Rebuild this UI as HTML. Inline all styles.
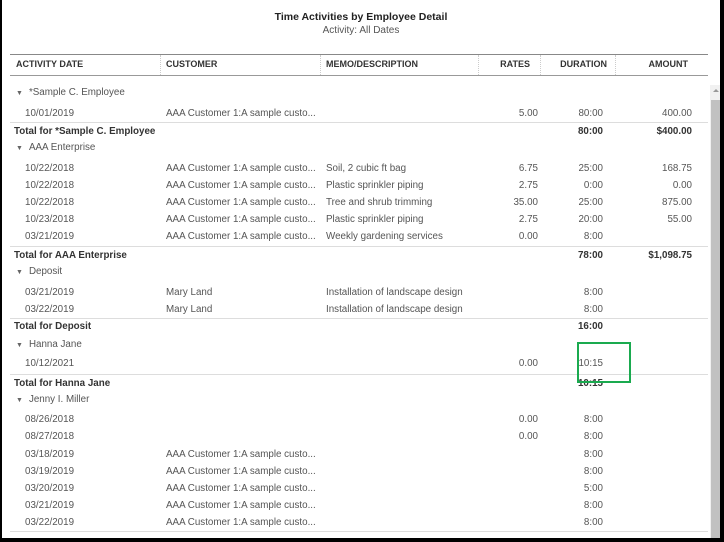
<!DOCTYPE html>
<html><head><meta charset="utf-8"><style>
body{margin:0;width:724px;height:542px;background:#000;overflow:hidden;font-family:"Liberation Sans",sans-serif}
#p{position:absolute;left:2px;top:0;width:718px;height:538px;background:#fff;overflow:hidden}
.t{position:absolute;font-size:9.8px;color:#555;white-space:nowrap;line-height:14px}
.b{font-weight:bold;color:#333}
.r{text-align:right}
.l{position:absolute;height:1px;background:#ddd;left:8px;width:698px}
.v{position:absolute;width:1px;top:55px;height:20px;border-left:1px dotted #ccc}
.ar{font-size:7px;color:#666;margin-right:6px}
</style></head><body><div id="p">
<div class="t b" style="left:0;width:718px;text-align:center;top:10px;font-size:10.5px;color:#222">Time Activities by Employee Detail</div>
<div class="t" style="left:0;width:718px;text-align:center;top:24px;font-size:10px">Activity: All Dates</div>
<div class="l" style="top:54px;background:#888"></div>
<div class="l" style="top:75px;background:#999"></div>
<div class="v" style="left:158px"></div><div class="v" style="left:318px"></div><div class="v" style="left:476px"></div><div class="v" style="left:538px"></div><div class="v" style="left:613px"></div>
<div class="t b" style="left:14px;top:57px;font-size:9px">ACTIVITY DATE</div>
<div class="t b" style="left:164px;top:57px;font-size:9px">CUSTOMER</div>
<div class="t b" style="left:324px;top:57px;font-size:9px">MEMO/DESCRIPTION</div>
<div class="t b r" style="right:190px;top:57px;font-size:9px">RATES</div>
<div class="t b r" style="right:113px;top:57px;font-size:9px">DURATION</div>
<div class="t b r" style="right:32px;top:57px;font-size:9px">AMOUNT</div>
<div style="position:absolute;left:708px;top:85px;width:10px;height:453px;background:#f1f1f1"></div>
<div style="position:absolute;left:709px;top:100px;width:9px;height:438px;background:#c1c1c1"></div>
<div style="position:absolute;left:711px;top:89px;width:0;height:0;border-left:3px solid transparent;border-right:3px solid transparent;border-bottom:3px solid #999"></div>

<div class="l" style="top:122px"></div><div class="l" style="top:246px"></div><div class="l" style="top:318px"></div><div class="l" style="top:374px"></div><div class="l" style="top:531px"></div>

<div class="t" style="left:14px;top:86px"><span class="ar">▼</span>*Sample C. Employee</div>
<div class="t" style="left:23px;top:107px">10/01/2019</div><div class="t" style="left:164px;top:107px">AAA Customer 1:A sample custo...</div><div class="t r" style="right:182px;top:107px">5.00</div><div class="t r" style="right:117px;top:107px">80:00</div><div class="t r" style="right:28px;top:107px">400.00</div>
<div class="t b" style="left:12px;top:125px">Total for *Sample C. Employee</div><div class="t b r" style="right:117px;top:125px">80:00</div><div class="t b r" style="right:28px;top:125px">$400.00</div>
<div class="t" style="left:14px;top:141px"><span class="ar">▼</span>AAA Enterprise</div>

<div class="t" style="left:23px;top:162px">10/22/2018</div><div class="t" style="left:164px;top:162px">AAA Customer 1:A sample custo...</div><div class="t" style="left:324px;top:162px">Soil, 2 cubic ft bag</div><div class="t r" style="right:182px;top:162px">6.75</div><div class="t r" style="right:117px;top:162px">25:00</div><div class="t r" style="right:28px;top:162px">168.75</div>
<div class="t" style="left:23px;top:179px">10/22/2018</div><div class="t" style="left:164px;top:179px">AAA Customer 1:A sample custo...</div><div class="t" style="left:324px;top:179px">Plastic sprinkler piping</div><div class="t r" style="right:182px;top:179px">2.75</div><div class="t r" style="right:117px;top:179px">0:00</div><div class="t r" style="right:28px;top:179px">0.00</div>
<div class="t" style="left:23px;top:196px">10/22/2018</div><div class="t" style="left:164px;top:196px">AAA Customer 1:A sample custo...</div><div class="t" style="left:324px;top:196px">Tree and shrub trimming</div><div class="t r" style="right:182px;top:196px">35.00</div><div class="t r" style="right:117px;top:196px">25:00</div><div class="t r" style="right:28px;top:196px">875.00</div>
<div class="t" style="left:23px;top:213px">10/23/2018</div><div class="t" style="left:164px;top:213px">AAA Customer 1:A sample custo...</div><div class="t" style="left:324px;top:213px">Plastic sprinkler piping</div><div class="t r" style="right:182px;top:213px">2.75</div><div class="t r" style="right:117px;top:213px">20:00</div><div class="t r" style="right:28px;top:213px">55.00</div>
<div class="t" style="left:23px;top:230px">03/21/2019</div><div class="t" style="left:164px;top:230px">AAA Customer 1:A sample custo...</div><div class="t" style="left:324px;top:230px">Weekly gardening services</div><div class="t r" style="right:182px;top:230px">0.00</div><div class="t r" style="right:117px;top:230px">8:00</div>
<div class="t b" style="left:12px;top:249px">Total for AAA Enterprise</div><div class="t b r" style="right:117px;top:249px">78:00</div><div class="t b r" style="right:28px;top:249px">$1,098.75</div>
<div class="t" style="left:14px;top:265px"><span class="ar">▼</span>Deposit</div>
<div class="t" style="left:23px;top:286px">03/21/2019</div><div class="t" style="left:164px;top:286px">Mary Land</div><div class="t" style="left:324px;top:286px">Installation of landscape design</div><div class="t r" style="right:117px;top:286px">8:00</div>
<div class="t" style="left:23px;top:303px">03/22/2019</div><div class="t" style="left:164px;top:303px">Mary Land</div><div class="t" style="left:324px;top:303px">Installation of landscape design</div><div class="t r" style="right:117px;top:303px">8:00</div>
<div class="t b" style="left:12px;top:320px">Total for Deposit</div><div class="t b r" style="right:117px;top:320px">16:00</div>
<div class="t" style="left:14px;top:338px"><span class="ar">▼</span>Hanna Jane</div>
<div class="t" style="left:23px;top:357px">10/12/2021</div><div class="t r" style="right:182px;top:357px">0.00</div><div class="t r" style="right:117px;top:357px">10:15</div>
<div class="t b" style="left:12px;top:377px">Total for Hanna Jane</div><div class="t b r" style="right:117px;top:377px">10:15</div>
<div style="position:absolute;left:575px;top:342px;width:50px;height:37px;border:2px solid #1aaa4f"></div>
<div class="t" style="left:14px;top:393px"><span class="ar">▼</span>Jenny I. Miller</div>
<div class="t" style="left:23px;top:413px">08/26/2018</div><div class="t r" style="right:182px;top:413px">0.00</div><div class="t r" style="right:117px;top:413px">8:00</div>
<div class="t" style="left:23px;top:430px">08/27/2018</div><div class="t r" style="right:182px;top:430px">0.00</div><div class="t r" style="right:117px;top:430px">8:00</div>
<div class="t" style="left:23px;top:448px">03/18/2019</div><div class="t" style="left:164px;top:448px">AAA Customer 1:A sample custo...</div><div class="t r" style="right:117px;top:448px">8:00</div>
<div class="t" style="left:23px;top:465px">03/19/2019</div><div class="t" style="left:164px;top:465px">AAA Customer 1:A sample custo...</div><div class="t r" style="right:117px;top:465px">8:00</div>
<div class="t" style="left:23px;top:482px">03/20/2019</div><div class="t" style="left:164px;top:482px">AAA Customer 1:A sample custo...</div><div class="t r" style="right:117px;top:482px">5:00</div>
<div class="t" style="left:23px;top:499px">03/21/2019</div><div class="t" style="left:164px;top:499px">AAA Customer 1:A sample custo...</div><div class="t r" style="right:117px;top:499px">8:00</div>
<div class="t" style="left:23px;top:516px">03/22/2019</div><div class="t" style="left:164px;top:516px">AAA Customer 1:A sample custo...</div><div class="t r" style="right:117px;top:516px">8:00</div>
</div></body></html>
